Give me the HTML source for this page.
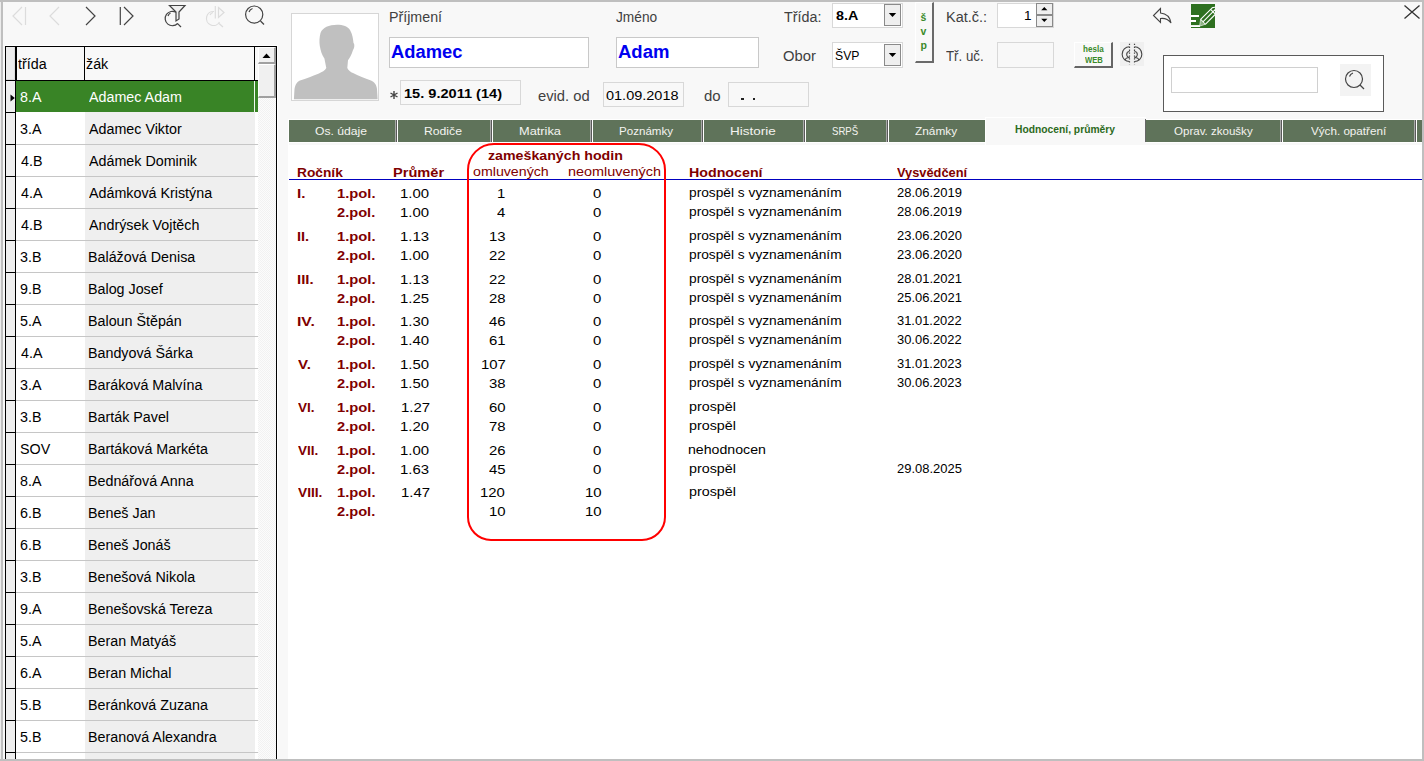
<!DOCTYPE html>
<html><head><meta charset="utf-8">
<style>
html,body{margin:0;padding:0;}
body{width:1424px;height:761px;overflow:hidden;position:relative;background:#f8f8f8;font-family:"Liberation Sans",sans-serif;}
.a{position:absolute;box-sizing:border-box;}
.t{position:absolute;white-space:nowrap;line-height:20px;transform-origin:0 0;}
.rl{position:absolute;left:16px;width:242px;height:1px;background:#c6c6c6;}
.rs{position:absolute;left:6px;width:10px;height:1px;background:#000;}
.cg{position:absolute;left:85px;width:170px;height:31px;background:#efefef;}
.tabd{position:absolute;top:120px;height:22px;width:3px;background:linear-gradient(90deg,#a8a8a8 0 1px,#5a5a5a 1px 2px,#fff 2px 3px);}
.box{position:absolute;box-sizing:border-box;border:1px solid #cfcfcf;}
</style></head><body>
<!-- nav icons -->
<svg class="a" style="left:0;top:0" width="280" height="35" viewBox="0 0 280 35">
 <g fill="none" stroke-width="1.2" stroke-linecap="butt">
  <path d="M22 7 L13 16 L22 25 M25.5 7 V25" stroke="#dcdcdc"/>
  <path d="M59 7 L50 16 L59 25" stroke="#dcdcdc"/>
  <path d="M86 7 L95 16 L86 25" stroke="#444"/>
  <path d="M120.3 7 V25 M124 7 L133 16 L124 25" stroke="#444"/>
  <!-- filter magnifier -->
  <path d="M176 12.3 A7.2 7.2 0 1 0 177.6 23.5" stroke="#444"/>
  <path d="M168 16 A5 5 0 0 1 170.5 13" stroke="#444"/>
  <path d="M177.3 23.3 L181 27" stroke="#444"/>
  <path d="M169.5 5.5 H185 L179 12 V19 L176 21 V12 Z" fill="#f0f0f0" stroke="#444"/>
  <!-- disabled -->
  <path d="M214 11.5 A7 7 0 1 0 219.5 22" stroke="#dcdcdc"/>
  <path d="M210 15 A5 5 0 0 1 213 12.5" stroke="#dcdcdc"/>
  <path d="M219 23.5 L223 27" stroke="#dcdcdc"/>
  <path d="M215.3 6 V18.5 M218.5 7.5 L224 12.5 L218.5 17.5 Z" stroke="#dcdcdc"/>
  <!-- search -->
  <circle cx="254.2" cy="14.6" r="8.6" stroke="#444"/>
  <path d="M249 12 A5.5 5.5 0 0 1 252.5 8.5" stroke="#444"/>
  <path d="M260.5 21 L264 24.5" stroke="#444"/>
 </g>
</svg>

<!-- list -->
<div class="a" style="left:5px;top:46px;width:272px;height:740px;border:1px solid #000;background:#fff"></div>
<div class="a" style="left:6px;top:47px;width:252px;height:33px;background:#f8f8f8"></div>
<div class="a" style="left:6px;top:47px;width:9px;height:33px;background:#ececec;border-right:1px solid #dcdcdc;border-bottom:1px solid #dcdcdc"></div>
<div class="a" style="left:15px;top:47px;width:2px;height:34px;background:#000"></div>
<div class="a" style="left:84px;top:47px;width:1px;height:33px;background:#000"></div>
<div class="a" style="left:254px;top:47px;width:1px;height:33px;background:#000"></div>
<div class="a" style="left:6px;top:80px;width:252px;height:1px;background:#000"></div>
<!-- record selector column -->
<div class="a" style="left:6px;top:81px;width:9px;height:680px;background:#efefef"></div>
<div class="a" style="left:15px;top:81px;width:1px;height:680px;background:#000"></div>
<!-- zak gray cells -->
<div class="a" style="left:85px;top:81px;width:170px;height:680px;background:#efefef"></div>
<div class="rs" style="top:112px"></div>
<div class="rl" style="top:144px"></div><div class="rs" style="top:144px"></div>
<div class="rl" style="top:176px"></div><div class="rs" style="top:176px"></div>
<div class="rl" style="top:208px"></div><div class="rs" style="top:208px"></div>
<div class="rl" style="top:240px"></div><div class="rs" style="top:240px"></div>
<div class="rl" style="top:272px"></div><div class="rs" style="top:272px"></div>
<div class="rl" style="top:304px"></div><div class="rs" style="top:304px"></div>
<div class="rl" style="top:336px"></div><div class="rs" style="top:336px"></div>
<div class="rl" style="top:368px"></div><div class="rs" style="top:368px"></div>
<div class="rl" style="top:400px"></div><div class="rs" style="top:400px"></div>
<div class="rl" style="top:432px"></div><div class="rs" style="top:432px"></div>
<div class="rl" style="top:464px"></div><div class="rs" style="top:464px"></div>
<div class="rl" style="top:496px"></div><div class="rs" style="top:496px"></div>
<div class="rl" style="top:528px"></div><div class="rs" style="top:528px"></div>
<div class="rl" style="top:560px"></div><div class="rs" style="top:560px"></div>
<div class="rl" style="top:592px"></div><div class="rs" style="top:592px"></div>
<div class="rl" style="top:624px"></div><div class="rs" style="top:624px"></div>
<div class="rl" style="top:656px"></div><div class="rs" style="top:656px"></div>
<div class="rl" style="top:688px"></div><div class="rs" style="top:688px"></div>
<div class="rl" style="top:720px"></div><div class="rs" style="top:720px"></div>
<div class="rl" style="top:752px"></div><div class="rs" style="top:752px"></div>
<!-- selected row -->
<div class="a" style="left:16px;top:81px;width:242px;height:31px;background:#398426"></div>
<div class="a" style="left:254px;top:81px;width:1px;height:31px;background:#f0f8f0"></div>
<svg class="a" style="left:9px;top:93px" width="7" height="10"><path d="M1.5 1.5 L5.8 5 L1.5 8.5 Z" fill="#000"/></svg>
<!-- scrollbar -->
<div class="a" style="left:258px;top:47px;width:18px;height:714px;background:repeating-conic-gradient(#f2f2f2 0 25%,#fcfcfc 0 50%) 0 0/2px 2px"></div>
<div class="a" style="left:258px;top:47px;width:18px;height:17px;background:#f0f0f0;border-right:2px solid #a0a0a0;border-bottom:2px solid #a0a0a0;border-top:1px solid #fff;border-left:1px solid #fff"></div>
<svg class="a" style="left:258px;top:47px" width="18" height="17"><path d="M4.5 11 L8.5 6.5 L12.5 11 Z" fill="#000"/></svg>
<div class="a" style="left:258px;top:64px;width:18px;height:34px;background:#f0f0f0;border-right:2px solid #a0a0a0;border-bottom:2px solid #a0a0a0;border-top:1px solid #fff;border-left:1px solid #fff"></div>

<!-- separator strip -->
<div class="a" style="left:277px;top:45px;width:1px;height:714px;background:#fff"></div><div class="a" style="left:5px;top:45px;width:273px;height:1px;background:#fff"></div>

<!-- photo -->
<div class="a" style="left:291px;top:13px;width:88px;height:88px;background:#fff;border:1px solid #d6d6d6"></div>
<svg class="a" style="left:291px;top:13px" width="88" height="88" viewBox="0 0 88 88">
 <path fill="#c0c0c0" d="M46 11.7 C52 11.7 57 13.5 59 17 C61.5 21 62 26 62.5 30 C63.8 31 63.5 35 62 37 C60.5 42 58.5 45 57 47.2 L56.3 55 C57.5 57.5 59.5 59 62 60 C68 63 75 65.5 80 67.5 C84 69.5 85.5 72 86 76 L86.6 86.3 L2.9 86.3 L3.5 76 C4.5 71 6 69 9 67.5 C15 65.5 22 63 28 60.5 C31 59 34 57.5 35.3 55 L33.4 45.6 C31 42 29.5 37.5 28.8 33 C28.2 29 28.4 24 29.5 20 C31.5 14.5 38 11.7 46 11.7 Z"/>
</svg>

<!-- text boxes -->
<div class="box" style="left:389px;top:37px;width:200px;height:31px;background:#fff;border-color:#c9c9c9"></div>
<div class="box" style="left:616px;top:37px;width:143px;height:31px;background:#fff;border-color:#c9c9c9"></div>
<div class="box" style="left:400px;top:80px;width:121px;height:25px;background:#f8f8f8;border-color:#d8d8d8"></div>
<div class="box" style="left:603px;top:82px;width:81px;height:25px;background:#f8f8f8;border-color:#d8d8d8"></div>
<div class="box" style="left:728px;top:82px;width:81px;height:25px;background:#f8f8f8;border-color:#d8d8d8"></div>
<div class="a" style="left:741px;top:97.5px;width:2.5px;height:2.5px;background:#222"></div>
<div class="a" style="left:752.5px;top:97.5px;width:2.5px;height:2.5px;background:#222"></div>
<svg class="a" style="left:388px;top:89px" width="12" height="12" viewBox="0 0 12 12"><g stroke="#444" stroke-width="1.4"><path d="M6 2 V10 M2.5 4 L9.5 8 M9.5 4 L2.5 8"/></g></svg>

<!-- combos -->
<div class="box" style="left:832px;top:3px;width:71px;height:25px;background:#fff;border-color:#d8d8d8"></div>
<div class="box" style="left:884px;top:4px;width:17px;height:22px;background:#efefef;border-color:#8a8a8a"></div>
<svg class="a" style="left:884px;top:4px" width="17" height="22"><path d="M4.8 9 L12.2 9 L8.5 13 Z" fill="#000"/></svg>
<div class="box" style="left:832px;top:42px;width:71px;height:26px;background:#fff;border-color:#d8d8d8"></div>
<div class="box" style="left:884px;top:44px;width:17px;height:22px;background:#efefef;border-color:#8a8a8a"></div>
<svg class="a" style="left:884px;top:44px" width="17" height="22"><path d="M4.8 9 L12.2 9 L8.5 13 Z" fill="#000"/></svg>

<!-- svp button -->
<div class="a" style="left:915px;top:2px;width:19px;height:61px;background:#f8f8f8;border-top:1px solid #fff;border-left:1px solid #fff;border-right:2px solid #6a6a6a;border-bottom:2px solid #6a6a6a"></div>
<div class="t" style="left:920.5px;top:6.5px;font-size:10.5px;font-weight:bold;color:#3a8a2a">š</div>
<div class="t" style="left:920.5px;top:21.3px;font-size:10.5px;font-weight:bold;color:#3a8a2a">v</div>
<div class="t" style="left:920.5px;top:35.2px;font-size:10.5px;font-weight:bold;color:#3a8a2a">p</div>

<!-- kat c -->
<div class="box" style="left:997px;top:3px;width:57px;height:25px;background:#fff;border-color:#d8d8d8"></div>
<div class="box" style="left:1036px;top:3px;width:17px;height:12px;background:#efefef;border-color:#8a8a8a"></div>
<div class="box" style="left:1036px;top:15px;width:17px;height:12px;background:#efefef;border-color:#8a8a8a"></div>
<svg class="a" style="left:1036px;top:3px" width="17" height="24"><path d="M5.2 7.3 L11.4 7.3 L8.3 4 Z M5.2 15.8 L11.4 15.8 L8.3 19.1 Z" fill="#000"/></svg>
<div class="box" style="left:997px;top:42px;width:57px;height:26px;background:#f8f8f8;border-color:#d8d8d8"></div>

<!-- hesla web -->
<div class="a" style="left:1074px;top:42px;width:39px;height:26px;background:#f8f8f8;border-top:1px solid #fff;border-left:1px solid #fff;border-right:2px solid #666;border-bottom:2px solid #666"></div>
<div class="t" style="left:1083px;top:39px;font-size:8.5px;font-weight:bold;color:#3a8a2a;transform:scaleX(0.95)">hesla</div>
<div class="t" style="left:1085px;top:50px;font-size:8.5px;font-weight:bold;color:#3a8a2a;transform:scaleX(0.9)">WEB</div>
<!-- person icon -->
<div class="a" style="left:1120px;top:42px;width:24px;height:24px;background:#f0f0f0"></div>
<svg class="a" style="left:1120px;top:42px" width="24" height="24" viewBox="0 0 24 24">
 <g fill="none" stroke="#444" stroke-width="1.1">
  <path d="M9.5 4.8 A7.3 7.3 0 0 0 9.5 19.5"/>
  <path d="M14.5 4.8 A7.3 7.3 0 0 1 14.5 19.5"/>
  <path d="M9.5 9.5 A2.8 3 0 0 0 9.5 15.5 M14.5 9.5 A2.8 3 0 0 1 14.5 15.5"/>
  <path d="M9.5 15.5 C7.5 15.5 5.5 16.5 5 18.3 M14.5 15.5 C16.5 15.5 18.5 16.5 19 18.3"/>
 </g>
 <g stroke="#444" stroke-width="1.2" stroke-dasharray="1.3 1.6">
  <path d="M9.5 1.8 V22.3 M14.5 1.8 V22.3"/>
 </g>
</svg>

<!-- undo icon -->
<svg class="a" style="left:1150px;top:5px" width="24" height="22" viewBox="0 0 24 22">
 <path d="M10.5 3.5 L3.5 10.5 L10.5 17.5 L10.5 13.5 C15 13 18.5 14.5 21 18 C20 12 16 8.5 10.5 8 Z" fill="none" stroke="#444" stroke-width="1.1" stroke-linejoin="miter"/>
</svg>
<!-- edit icon -->
<div class="a" style="left:1191px;top:4px;width:24px;height:24px;background:#2e7020"></div>
<svg class="a" style="left:1191px;top:4px" width="24" height="24" viewBox="0 0 24 24">
 <defs><clipPath id="ec"><rect x="0" y="0" width="24" height="24"/></clipPath></defs>
 <g fill="#fff">
  <rect x="0" y="11" width="8" height="2"/>
  <rect x="0" y="16" width="5" height="2"/>
  <rect x="0" y="21.1" width="9" height="1.9"/>
 </g>
 <g clip-path="url(#ec)" fill="none" stroke="#fff" stroke-width="1.1">
  <path d="M9.6 15.4 L21.2 3.8 Q22 3.2 24.5 3.3"/>
  <path d="M14.3 20.3 L25 9.6"/>
  <path d="M11.95 17.85 L24.5 5.3"/>
  <path d="M9.6 15.4 L14.3 20.3"/>
  <path d="M19.6 5.4 L24 9.8"/>
 </g>
 <path d="M9.6 15.4 L14.3 20.3 L8.6 22.2 Z" fill="#8db483" stroke="#fff" stroke-width="0.6"/>
</svg>
<!-- close X -->
<svg class="a" style="left:1400px;top:2px" width="24" height="20" viewBox="0 0 24 20"><path d="M4.5 3.5 L19.5 16.5 M19.5 3.5 L4.5 16.5" stroke="#333" stroke-width="1.3"/></svg>

<!-- search frame -->
<div class="a" style="left:1163px;top:55px;width:221px;height:57px;background:#fff;border:1px solid #5a5a5a"></div>
<div class="box" style="left:1171px;top:67px;width:147px;height:26px;background:#fff;border-color:#d0d0d0"></div>
<div class="a" style="left:1340px;top:64px;width:31px;height:32px;background:#f3f3f3"></div>
<svg class="a" style="left:1340px;top:64px" width="31" height="32" viewBox="0 0 31 32">
 <g fill="none" stroke="#444" stroke-width="1.2">
  <circle cx="14" cy="15" r="8.5"/>
  <path d="M9.5 12.5 A5.5 5.5 0 0 1 13 9"/>
  <path d="M20 21 L24 25"/>
 </g>
</svg>

<!-- tabs -->
<div class="a" style="left:288px;top:119px;width:1134px;height:640px;background:#fff"></div>
<div class="a" style="left:289px;top:120px;width:1133px;height:22px;background:#5f735a"></div>
<div class="a" style="left:289px;top:143px;width:1133px;height:2px;background:#f8f8f8"></div>
<div class="tabd" style="left:395px"></div>
<div class="tabd" style="left:490px"></div>
<div class="tabd" style="left:590px"></div>
<div class="tabd" style="left:701px"></div>
<div class="tabd" style="left:803px"></div>
<div class="tabd" style="left:886px"></div>
<div class="tabd" style="left:1280px"></div>
<div class="tabd" style="left:1414px"></div>
<!-- active tab -->
<div class="a" style="left:985px;top:117px;width:161px;height:28px;background:#f8f8f8;border-left:1px solid #fff;border-top:1px solid #fff"></div>
<div class="a" style="left:1145px;top:119px;width:1px;height:23px;background:#666"></div>
<div class="a" style="left:1146px;top:119px;width:276px;height:1px;background:#fff"></div>

<!-- table -->
<div class="a" style="left:289px;top:179px;width:1133px;height:1px;background:#0000c0"></div>
<div class="a" style="left:467px;top:143px;width:199px;height:398px;border:2px solid #ff0000;border-radius:27px 27px 24px 24px"></div>

<div class="t" style="left:20.49px;top:87px;font-size:14px;color:#ffffff;transform:scaleX(1.0206);">8.A</div>
<div class="t" style="left:88.80px;top:87px;font-size:14px;color:#ffffff;transform:scaleX(1.0206);">Adamec Adam</div>
<div class="t" style="left:20.49px;top:119px;font-size:14px;color:#000;transform:scaleX(1.0206);">3.A</div>
<div class="t" style="left:88.80px;top:119px;font-size:14px;color:#000;transform:scaleX(1.0206);">Adamec Viktor</div>
<div class="t" style="left:20.74px;top:151px;font-size:14px;color:#000;transform:scaleX(1.0206);">4.B</div>
<div class="t" style="left:88.80px;top:151px;font-size:14px;color:#000;transform:scaleX(1.0206);">Adámek Dominik</div>
<div class="t" style="left:20.74px;top:183px;font-size:14px;color:#000;transform:scaleX(1.0206);">4.A</div>
<div class="t" style="left:88.80px;top:183px;font-size:14px;color:#000;transform:scaleX(1.0206);">Adámková Kristýna</div>
<div class="t" style="left:20.74px;top:215px;font-size:14px;color:#000;transform:scaleX(1.0206);">4.B</div>
<div class="t" style="left:88.80px;top:215px;font-size:14px;color:#000;transform:scaleX(1.0206);">Andrýsek Vojtěch</div>
<div class="t" style="left:20.49px;top:247px;font-size:14px;color:#000;transform:scaleX(1.0206);">3.B</div>
<div class="t" style="left:87.78px;top:247px;font-size:14px;color:#000;transform:scaleX(1.0206);">Balážová Denisa</div>
<div class="t" style="left:20.49px;top:279px;font-size:14px;color:#000;transform:scaleX(1.0206);">9.B</div>
<div class="t" style="left:87.78px;top:279px;font-size:14px;color:#000;transform:scaleX(1.0206);">Balog Josef</div>
<div class="t" style="left:20.49px;top:311px;font-size:14px;color:#000;transform:scaleX(1.0206);">5.A</div>
<div class="t" style="left:87.78px;top:311px;font-size:14px;color:#000;transform:scaleX(1.0206);">Baloun Štěpán</div>
<div class="t" style="left:20.74px;top:343px;font-size:14px;color:#000;transform:scaleX(1.0206);">4.A</div>
<div class="t" style="left:87.78px;top:343px;font-size:14px;color:#000;transform:scaleX(1.0206);">Bandyová Šárka</div>
<div class="t" style="left:20.49px;top:375px;font-size:14px;color:#000;transform:scaleX(1.0206);">3.A</div>
<div class="t" style="left:87.78px;top:375px;font-size:14px;color:#000;transform:scaleX(1.0206);">Baráková Malvína</div>
<div class="t" style="left:20.49px;top:407px;font-size:14px;color:#000;transform:scaleX(1.0206);">3.B</div>
<div class="t" style="left:87.78px;top:407px;font-size:14px;color:#000;transform:scaleX(1.0206);">Barták Pavel</div>
<div class="t" style="left:20.23px;top:439px;font-size:14px;color:#000;transform:scaleX(1.0206);">SOV</div>
<div class="t" style="left:87.78px;top:439px;font-size:14px;color:#000;transform:scaleX(1.0206);">Bartáková Markéta</div>
<div class="t" style="left:20.49px;top:471px;font-size:14px;color:#000;transform:scaleX(1.0206);">8.A</div>
<div class="t" style="left:87.78px;top:471px;font-size:14px;color:#000;transform:scaleX(1.0206);">Bednářová Anna</div>
<div class="t" style="left:20.23px;top:503px;font-size:14px;color:#000;transform:scaleX(1.0206);">6.B</div>
<div class="t" style="left:87.78px;top:503px;font-size:14px;color:#000;transform:scaleX(1.0206);">Beneš Jan</div>
<div class="t" style="left:20.23px;top:535px;font-size:14px;color:#000;transform:scaleX(1.0206);">6.B</div>
<div class="t" style="left:87.78px;top:535px;font-size:14px;color:#000;transform:scaleX(1.0206);">Beneš Jonáš</div>
<div class="t" style="left:20.49px;top:567px;font-size:14px;color:#000;transform:scaleX(1.0206);">3.B</div>
<div class="t" style="left:87.78px;top:567px;font-size:14px;color:#000;transform:scaleX(1.0206);">Benešová Nikola</div>
<div class="t" style="left:20.49px;top:599px;font-size:14px;color:#000;transform:scaleX(1.0206);">9.A</div>
<div class="t" style="left:87.78px;top:599px;font-size:14px;color:#000;transform:scaleX(1.0206);">Benešovská Tereza</div>
<div class="t" style="left:20.49px;top:631px;font-size:14px;color:#000;transform:scaleX(1.0206);">5.A</div>
<div class="t" style="left:87.78px;top:631px;font-size:14px;color:#000;transform:scaleX(1.0206);">Beran Matyáš</div>
<div class="t" style="left:20.23px;top:663px;font-size:14px;color:#000;transform:scaleX(1.0206);">6.A</div>
<div class="t" style="left:87.78px;top:663px;font-size:14px;color:#000;transform:scaleX(1.0206);">Beran Michal</div>
<div class="t" style="left:20.49px;top:695px;font-size:14px;color:#000;transform:scaleX(1.0206);">5.B</div>
<div class="t" style="left:87.78px;top:695px;font-size:14px;color:#000;transform:scaleX(1.0206);">Beránková Zuzana</div>
<div class="t" style="left:20.49px;top:727px;font-size:14px;color:#000;transform:scaleX(1.0206);">5.B</div>
<div class="t" style="left:87.78px;top:727px;font-size:14px;color:#000;transform:scaleX(1.0206);">Beranová Alexandra</div>
<div class="t" style="left:18.14px;top:54px;font-size:14px;color:#000;transform:scaleX(1.0206);">třída</div>
<div class="t" style="left:85.69px;top:54px;font-size:14px;color:#000;transform:scaleX(1.0206);">žák</div>
<div class="t" style="left:388.58px;top:7px;font-size:14px;color:#404040;transform:scaleX(1.0176);">Příjmení</div>
<div class="t" style="left:615.76px;top:7px;font-size:14px;color:#404040;transform:scaleX(0.9794);">Jméno</div>
<div class="t" style="left:783.84px;top:7px;font-size:14px;color:#404040;transform:scaleX(1.0229);">Třída:</div>
<div class="t" style="left:783.21px;top:46px;font-size:14px;color:#404040;transform:scaleX(1.0579);">Obor</div>
<div class="t" style="left:945.57px;top:7px;font-size:14px;color:#404040;transform:scaleX(1.0347);">Kat.č.:</div>
<div class="t" style="left:945.76px;top:46px;font-size:14px;color:#404040;transform:scaleX(0.9490);">Tř. uč.</div>
<div class="t" style="left:538.47px;top:86px;font-size:14px;color:#404040;transform:scaleX(1.0534);">evid. od</div>
<div class="t" style="left:703.77px;top:86px;font-size:14px;color:#404040;transform:scaleX(1.0690);">do</div>
<div class="t" style="left:391.09px;top:42px;font-size:18px;color:#0000f0;font-weight:bold;transform:scaleX(1.0188);">Adamec</div>
<div class="t" style="left:618.09px;top:42px;font-size:18px;color:#0000f0;font-weight:bold;transform:scaleX(1.0289);">Adam</div>
<div class="t" style="left:403.89px;top:84px;font-size:13.5px;color:#000;font-weight:bold;transform:scaleX(1.0793);">15. 9.2011 (14)</div>
<div class="t" style="left:606.46px;top:86px;font-size:13.5px;color:#000;transform:scaleX(1.0737);">01.09.2018</div>
<div class="t" style="left:835.77px;top:6px;font-size:13.5px;color:#000;font-weight:bold;transform:scaleX(1.0617);">8.A</div>
<div class="t" style="left:835.25px;top:46px;font-size:13.5px;color:#000;transform:scaleX(0.9049);">ŠVP</div>
<div class="t" style="left:1024.00px;top:6px;font-size:13.5px;color:#000;">1</div>
<div class="t" style="left:315.17px;top:121px;font-size:11.5px;color:#f4f4f0;transform:scaleX(1.0570);">Os. údaje</div>
<div class="t" style="left:424.34px;top:121px;font-size:11.5px;color:#f4f4f0;transform:scaleX(1.0599);">Rodiče</div>
<div class="t" style="left:519.39px;top:121px;font-size:11.5px;color:#f4f4f0;transform:scaleX(1.1129);">Matrika</div>
<div class="t" style="left:619.39px;top:121px;font-size:11.5px;color:#f4f4f0;transform:scaleX(1.0066);">Poznámky</div>
<div class="t" style="left:729.73px;top:121px;font-size:11.5px;color:#f4f4f0;transform:scaleX(1.1707);">Historie</div>
<div class="t" style="left:832.48px;top:121px;font-size:11.5px;color:#f4f4f0;transform:scaleX(0.8364);">SRPŠ</div>
<div class="t" style="left:915.44px;top:121px;font-size:11.5px;color:#f4f4f0;transform:scaleX(1.0296);">Známky</div>
<div class="t" style="left:1173.50px;top:121px;font-size:11.5px;color:#f4f4f0;transform:scaleX(1.0032);">Oprav. zkoušky</div>
<div class="t" style="left:1310.50px;top:121px;font-size:11.5px;color:#f4f4f0;transform:scaleX(1.0135);">Vých. opatření</div>
<div class="t" style="left:1014.80px;top:119px;font-size:11px;color:#2c6a1c;font-weight:bold;transform:scaleX(0.9349);">Hodnocení, průměry</div>
<div class="t" style="left:296.81px;top:163px;font-size:13px;color:#7f0000;font-weight:bold;transform:scaleX(1.0565);">Ročník</div>
<div class="t" style="left:392.76px;top:163px;font-size:13px;color:#7f0000;font-weight:bold;transform:scaleX(1.1236);">Průměr</div>
<div class="t" style="left:688.68px;top:163px;font-size:13px;color:#7f0000;font-weight:bold;transform:scaleX(1.0951);">Hodnocení</div>
<div class="t" style="left:897.00px;top:163px;font-size:13px;color:#7f0000;font-weight:bold;transform:scaleX(0.9860);">Vysvědčení</div>
<div class="t" style="left:488.45px;top:146px;font-size:13px;color:#7f0000;font-weight:bold;transform:scaleX(1.0920);">zameškaných hodin</div>
<div class="t" style="left:473.07px;top:162px;font-size:13.5px;color:#7f0000;transform:scaleX(1.0516);">omluvených</div>
<div class="t" style="left:568.33px;top:162px;font-size:13.5px;color:#7f0000;transform:scaleX(1.0686);">neomluvených</div>
<div class="t" style="left:296.93px;top:184px;font-size:13px;color:#7f0000;font-weight:bold;transform:scaleX(1.1652);">I.</div>
<div class="t" style="left:336.55px;top:184px;font-size:13px;color:#7f0000;font-weight:bold;transform:scaleX(1.1349);">1.pol.</div>
<div class="t" style="left:400.35px;top:184px;font-size:13.5px;color:#000;transform:scaleX(1.1049);">1.00</div>
<div class="t" style="left:496.87px;top:184px;font-size:13.5px;color:#000;transform:scaleX(1.1049);">1</div>
<div class="t" style="left:593.07px;top:184px;font-size:13.5px;color:#000;transform:scaleX(1.1049);">0</div>
<div class="t" style="left:688.74px;top:183px;font-size:13.5px;color:#000;transform:scaleX(1.0168);">prospěl s vyznamenáním</div>
<div class="t" style="left:896.68px;top:183px;font-size:13.5px;color:#000;transform:scaleX(0.9600);">28.06.2019</div>
<div class="t" style="left:336.84px;top:203px;font-size:13px;color:#7f0000;font-weight:bold;transform:scaleX(1.1262);">2.pol.</div>
<div class="t" style="left:400.35px;top:203px;font-size:13.5px;color:#000;transform:scaleX(1.1049);">1.00</div>
<div class="t" style="left:496.59px;top:203px;font-size:13.5px;color:#000;transform:scaleX(1.1049);">4</div>
<div class="t" style="left:593.07px;top:203px;font-size:13.5px;color:#000;transform:scaleX(1.1049);">0</div>
<div class="t" style="left:688.74px;top:202px;font-size:13.5px;color:#000;transform:scaleX(1.0168);">prospěl s vyznamenáním</div>
<div class="t" style="left:896.68px;top:202px;font-size:13.5px;color:#000;transform:scaleX(0.9600);">28.06.2019</div>
<div class="t" style="left:296.96px;top:227px;font-size:13px;color:#7f0000;font-weight:bold;transform:scaleX(1.1243);">II.</div>
<div class="t" style="left:336.55px;top:227px;font-size:13px;color:#7f0000;font-weight:bold;transform:scaleX(1.1349);">1.pol.</div>
<div class="t" style="left:400.35px;top:227px;font-size:13.5px;color:#000;transform:scaleX(1.1049);">1.13</div>
<div class="t" style="left:488.58px;top:227px;font-size:13.5px;color:#000;transform:scaleX(1.1049);">13</div>
<div class="t" style="left:593.07px;top:227px;font-size:13.5px;color:#000;transform:scaleX(1.1049);">0</div>
<div class="t" style="left:688.74px;top:226px;font-size:13.5px;color:#000;transform:scaleX(1.0168);">prospěl s vyznamenáním</div>
<div class="t" style="left:896.68px;top:226px;font-size:13.5px;color:#000;transform:scaleX(0.9600);">23.06.2020</div>
<div class="t" style="left:336.84px;top:246px;font-size:13px;color:#7f0000;font-weight:bold;transform:scaleX(1.1262);">2.pol.</div>
<div class="t" style="left:400.35px;top:246px;font-size:13.5px;color:#000;transform:scaleX(1.1049);">1.00</div>
<div class="t" style="left:488.86px;top:246px;font-size:13.5px;color:#000;transform:scaleX(1.1049);">22</div>
<div class="t" style="left:593.07px;top:246px;font-size:13.5px;color:#000;transform:scaleX(1.1049);">0</div>
<div class="t" style="left:688.74px;top:245px;font-size:13.5px;color:#000;transform:scaleX(1.0168);">prospěl s vyznamenáním</div>
<div class="t" style="left:896.68px;top:245px;font-size:13.5px;color:#000;transform:scaleX(0.9600);">23.06.2020</div>
<div class="t" style="left:296.94px;top:270px;font-size:13px;color:#7f0000;font-weight:bold;transform:scaleX(1.1451);">III.</div>
<div class="t" style="left:336.55px;top:270px;font-size:13px;color:#7f0000;font-weight:bold;transform:scaleX(1.1349);">1.pol.</div>
<div class="t" style="left:400.35px;top:270px;font-size:13.5px;color:#000;transform:scaleX(1.1049);">1.13</div>
<div class="t" style="left:488.86px;top:270px;font-size:13.5px;color:#000;transform:scaleX(1.1049);">22</div>
<div class="t" style="left:593.07px;top:270px;font-size:13.5px;color:#000;transform:scaleX(1.1049);">0</div>
<div class="t" style="left:688.74px;top:269px;font-size:13.5px;color:#000;transform:scaleX(1.0168);">prospěl s vyznamenáním</div>
<div class="t" style="left:896.68px;top:269px;font-size:13.5px;color:#000;transform:scaleX(0.9600);">28.01.2021</div>
<div class="t" style="left:336.84px;top:289px;font-size:13px;color:#7f0000;font-weight:bold;transform:scaleX(1.1262);">2.pol.</div>
<div class="t" style="left:400.35px;top:289px;font-size:13.5px;color:#000;transform:scaleX(1.1049);">1.25</div>
<div class="t" style="left:488.58px;top:289px;font-size:13.5px;color:#000;transform:scaleX(1.1049);">28</div>
<div class="t" style="left:593.07px;top:289px;font-size:13.5px;color:#000;transform:scaleX(1.1049);">0</div>
<div class="t" style="left:688.74px;top:288px;font-size:13.5px;color:#000;transform:scaleX(1.0168);">prospěl s vyznamenáním</div>
<div class="t" style="left:896.68px;top:288px;font-size:13.5px;color:#000;transform:scaleX(0.9600);">25.06.2021</div>
<div class="t" style="left:296.89px;top:312px;font-size:13px;color:#7f0000;font-weight:bold;transform:scaleX(1.2077);">IV.</div>
<div class="t" style="left:336.55px;top:312px;font-size:13px;color:#7f0000;font-weight:bold;transform:scaleX(1.1349);">1.pol.</div>
<div class="t" style="left:400.35px;top:312px;font-size:13.5px;color:#000;transform:scaleX(1.1049);">1.30</div>
<div class="t" style="left:488.58px;top:312px;font-size:13.5px;color:#000;transform:scaleX(1.1049);">46</div>
<div class="t" style="left:593.07px;top:312px;font-size:13.5px;color:#000;transform:scaleX(1.1049);">0</div>
<div class="t" style="left:688.74px;top:311px;font-size:13.5px;color:#000;transform:scaleX(1.0168);">prospěl s vyznamenáním</div>
<div class="t" style="left:896.92px;top:311px;font-size:13.5px;color:#000;transform:scaleX(0.9564);">31.01.2022</div>
<div class="t" style="left:336.84px;top:331px;font-size:13px;color:#7f0000;font-weight:bold;transform:scaleX(1.1262);">2.pol.</div>
<div class="t" style="left:400.35px;top:331px;font-size:13.5px;color:#000;transform:scaleX(1.1049);">1.40</div>
<div class="t" style="left:488.58px;top:331px;font-size:13.5px;color:#000;transform:scaleX(1.1049);">61</div>
<div class="t" style="left:593.07px;top:331px;font-size:13.5px;color:#000;transform:scaleX(1.1049);">0</div>
<div class="t" style="left:688.74px;top:330px;font-size:13.5px;color:#000;transform:scaleX(1.0168);">prospěl s vyznamenáním</div>
<div class="t" style="left:896.92px;top:330px;font-size:13.5px;color:#000;transform:scaleX(0.9564);">30.06.2022</div>
<div class="t" style="left:297.80px;top:355px;font-size:13px;color:#7f0000;font-weight:bold;transform:scaleX(1.1610);">V.</div>
<div class="t" style="left:336.55px;top:355px;font-size:13px;color:#7f0000;font-weight:bold;transform:scaleX(1.1349);">1.pol.</div>
<div class="t" style="left:400.35px;top:355px;font-size:13.5px;color:#000;transform:scaleX(1.1049);">1.50</div>
<div class="t" style="left:480.57px;top:355px;font-size:13.5px;color:#000;transform:scaleX(1.1049);">107</div>
<div class="t" style="left:593.07px;top:355px;font-size:13.5px;color:#000;transform:scaleX(1.1049);">0</div>
<div class="t" style="left:688.74px;top:354px;font-size:13.5px;color:#000;transform:scaleX(1.0168);">prospěl s vyznamenáním</div>
<div class="t" style="left:896.92px;top:354px;font-size:13.5px;color:#000;transform:scaleX(0.9564);">31.01.2023</div>
<div class="t" style="left:336.84px;top:374px;font-size:13px;color:#7f0000;font-weight:bold;transform:scaleX(1.1262);">2.pol.</div>
<div class="t" style="left:400.35px;top:374px;font-size:13.5px;color:#000;transform:scaleX(1.1049);">1.50</div>
<div class="t" style="left:488.58px;top:374px;font-size:13.5px;color:#000;transform:scaleX(1.1049);">38</div>
<div class="t" style="left:593.07px;top:374px;font-size:13.5px;color:#000;transform:scaleX(1.1049);">0</div>
<div class="t" style="left:688.74px;top:373px;font-size:13.5px;color:#000;transform:scaleX(1.0168);">prospěl s vyznamenáním</div>
<div class="t" style="left:896.92px;top:373px;font-size:13.5px;color:#000;transform:scaleX(0.9564);">30.06.2023</div>
<div class="t" style="left:297.80px;top:398px;font-size:13px;color:#7f0000;font-weight:bold;transform:scaleX(1.0467);">VI.</div>
<div class="t" style="left:336.55px;top:398px;font-size:13px;color:#7f0000;font-weight:bold;transform:scaleX(1.1349);">1.pol.</div>
<div class="t" style="left:400.63px;top:398px;font-size:13.5px;color:#000;transform:scaleX(1.1049);">1.27</div>
<div class="t" style="left:488.58px;top:398px;font-size:13.5px;color:#000;transform:scaleX(1.1049);">60</div>
<div class="t" style="left:593.07px;top:398px;font-size:13.5px;color:#000;transform:scaleX(1.1049);">0</div>
<div class="t" style="left:688.71px;top:397px;font-size:13.5px;color:#000;transform:scaleX(1.0596);">prospěl</div>
<div class="t" style="left:336.84px;top:417px;font-size:13px;color:#7f0000;font-weight:bold;transform:scaleX(1.1262);">2.pol.</div>
<div class="t" style="left:400.35px;top:417px;font-size:13.5px;color:#000;transform:scaleX(1.1049);">1.20</div>
<div class="t" style="left:488.58px;top:417px;font-size:13.5px;color:#000;transform:scaleX(1.1049);">78</div>
<div class="t" style="left:593.07px;top:417px;font-size:13.5px;color:#000;transform:scaleX(1.1049);">0</div>
<div class="t" style="left:688.71px;top:416px;font-size:13.5px;color:#000;transform:scaleX(1.0596);">prospěl</div>
<div class="t" style="left:297.80px;top:441px;font-size:13px;color:#7f0000;font-weight:bold;transform:scaleX(1.0400);">VII.</div>
<div class="t" style="left:336.55px;top:441px;font-size:13px;color:#7f0000;font-weight:bold;transform:scaleX(1.1349);">1.pol.</div>
<div class="t" style="left:400.35px;top:441px;font-size:13.5px;color:#000;transform:scaleX(1.1049);">1.00</div>
<div class="t" style="left:488.58px;top:441px;font-size:13.5px;color:#000;transform:scaleX(1.1049);">26</div>
<div class="t" style="left:593.07px;top:441px;font-size:13.5px;color:#000;transform:scaleX(1.1049);">0</div>
<div class="t" style="left:688.45px;top:440px;font-size:13.5px;color:#000;transform:scaleX(1.0483);">nehodnocen</div>
<div class="t" style="left:336.84px;top:460px;font-size:13px;color:#7f0000;font-weight:bold;transform:scaleX(1.1262);">2.pol.</div>
<div class="t" style="left:400.35px;top:460px;font-size:13.5px;color:#000;transform:scaleX(1.1049);">1.63</div>
<div class="t" style="left:488.58px;top:460px;font-size:13.5px;color:#000;transform:scaleX(1.1049);">45</div>
<div class="t" style="left:593.07px;top:460px;font-size:13.5px;color:#000;transform:scaleX(1.1049);">0</div>
<div class="t" style="left:688.71px;top:459px;font-size:13.5px;color:#000;transform:scaleX(1.0596);">prospěl</div>
<div class="t" style="left:896.68px;top:459px;font-size:13.5px;color:#000;transform:scaleX(0.9600);">29.08.2025</div>
<div class="t" style="left:297.80px;top:483px;font-size:13px;color:#7f0000;font-weight:bold;transform:scaleX(1.0562);">VIII.</div>
<div class="t" style="left:336.55px;top:483px;font-size:13px;color:#7f0000;font-weight:bold;transform:scaleX(1.1349);">1.pol.</div>
<div class="t" style="left:400.63px;top:483px;font-size:13.5px;color:#000;transform:scaleX(1.1049);">1.47</div>
<div class="t" style="left:480.29px;top:483px;font-size:13.5px;color:#000;transform:scaleX(1.1049);">120</div>
<div class="t" style="left:584.78px;top:483px;font-size:13.5px;color:#000;transform:scaleX(1.1049);">10</div>
<div class="t" style="left:688.71px;top:482px;font-size:13.5px;color:#000;transform:scaleX(1.0596);">prospěl</div>
<div class="t" style="left:336.84px;top:502px;font-size:13px;color:#7f0000;font-weight:bold;transform:scaleX(1.1262);">2.pol.</div>
<div class="t" style="left:488.58px;top:502px;font-size:13.5px;color:#000;transform:scaleX(1.1049);">10</div>
<div class="t" style="left:584.78px;top:502px;font-size:13.5px;color:#000;transform:scaleX(1.1049);">10</div>
<!-- window border -->
<div class="a" style="left:0;top:0;width:1px;height:761px;background:#ececec"></div>
<div class="a" style="left:0;top:0;width:1424px;height:2px;background:#bfbfbf"></div>
<div class="a" style="left:1px;top:0;width:2px;height:761px;background:#bfbfbf"></div>
<div class="a" style="left:1422px;top:0;width:2px;height:761px;background:#bfbfbf"></div>
<div class="a" style="left:0;top:759px;width:1424px;height:2px;background:#bfbfbf"></div>


</body></html>
